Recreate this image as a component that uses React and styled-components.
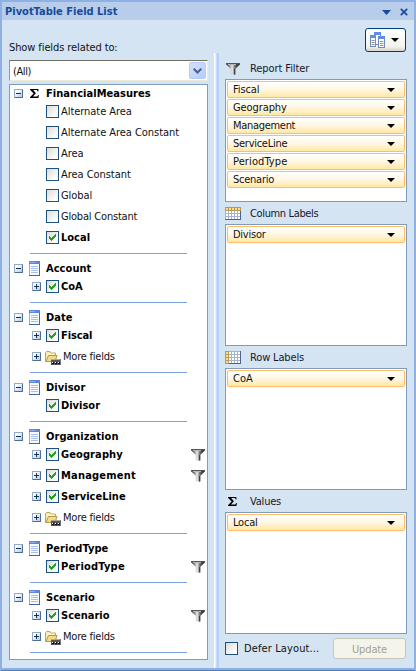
import React from "react";
import styled, { createGlobalStyle, css } from "styled-components";

const GlobalStyle = createGlobalStyle`
  *, *::before, *::after { box-sizing: border-box; }
  body { margin: 0; background: #d5e4f2; }
  svg { display: block; flex: none; }
`;

const Pane = styled.div`
  width: 416px;
  height: 671px;
  display: flex;
  flex-direction: column;
  background: #d5e4f2;
  border: 2px solid #8fb0e5;
  border-bottom: 1px solid #4f7fb9;
  box-shadow: inset 0 -2px 0 #8fb0e5;
  font-family: "DejaVu Sans Condensed", "DejaVu Sans", sans-serif;
  font-stretch: condensed;
  font-size: 11px;
  line-height: 14px;
  color: #111;
  white-space: nowrap;
  overflow: hidden;
`;

const TitleBar = styled.header`
  flex: none;
  height: 18px;
  display: flex;
  align-items: center;
  padding: 2px 6px 0 3px;
  background: #b8cde9;
  color: #174a9b;
`;

const Title = styled.h1`
  flex: 1;
  margin: 0;
  font-size: 11px;
  line-height: 14px;
  font-weight: bold;
  letter-spacing: 0;
`;

const TitleActions = styled.div`
  display: flex;
  align-items: center;
  gap: 9px;
`;

const Body = styled.main`
  flex: 1;
  min-height: 0;
  display: flex;
  padding: 0 0 2px 7px;
`;

const FieldsColumn = styled.section`
  width: 199px;
  padding-top: 20px;
`;

const FieldsLabel = styled.div`
  height: 20px;
  line-height: 15px;
`;

const Combo = styled.div`
  display: flex;
  align-items: center;
  justify-content: space-between;
  height: 21px;
  margin-bottom: 3px;
  padding: 0 1px 0 3px;
  background: #fff;
  border: 1px solid #ece9d8;
  border-top-color: #716f64;
  border-left-color: #9d9a8b;
`;

const ComboText = styled.span`
  padding-top: 2px;
`;

const ComboButton = styled.span`
  display: flex;
  align-items: center;
  justify-content: center;
  width: 17px;
  height: 17px;
  border-radius: 2px;
  border: 1px solid #b5cbf8;
  background: linear-gradient(135deg, #d5e2ff, #b5cbf9);
`;

const FieldList = styled.div`
  height: 576px;
  padding: 1px 0 0 4px;
  background: #fff;
  border: 1px solid #7f9db9;
`;

const Group = styled.div``;

const GroupHeader = styled.div`
  display: flex;
  align-items: center;
  height: 15px;
`;

const GroupIcon = styled.span`
  display: flex;
  justify-content: center;
  width: 23px;
  padding-right: 1px;
`;

const BoldText = styled.span`
  font-weight: bold;
  letter-spacing: ${(p) => p.$spacing ?? 0}px;
  color: #000;
`;

const PlainText = styled.span`
  letter-spacing: ${(p) => p.$spacing ?? 0}px;
`;

const FieldRow = styled.div`
  display: flex;
  align-items: center;
  height: 21px;
  padding: 0 2px 0 18px;
`;

const ExpandSlot = styled.span`
  display: flex;
  width: 14px;
`;

const FolderSlot = styled.span`
  margin: 2px 0 0 -1px;
`;

const FieldName = styled.span`
  flex: 1;
  display: flex;
  padding-left: 2px;
`;

const Divider = styled.hr`
  width: 157px;
  height: 1px;
  margin: 5px 0 7px 16px;
  border: 0;
  background: #7da2e0;
`;

const Toggle = styled.span`
  flex: none;
  position: relative;
  width: 9px;
  height: 9px;
  border: 1px solid #8fa9c6;
  border-right-color: #4b6c94;
  border-bottom-color: #4b6c94;
  border-radius: 1px;
  background: linear-gradient(135deg, #fff 20%, #b3c8e6);
  &::before,
  &::after {
    content: "";
    position: absolute;
    background: #17324f;
  }
  &::before {
    left: 1px;
    top: 3px;
    width: 5px;
    height: 1px;
  }
  ${(p) =>
    p.$plus &&
    css`
      &::after {
        left: 3px;
        top: 1px;
        width: 1px;
        height: 5px;
      }
    `}
`;

const CheckSquare = styled.span`
  flex: none;
  display: block;
  width: 13px;
  height: 13px;
  border: 1px solid #1c5180;
  background: linear-gradient(135deg, #dcdcd7, #fff 85%);
`;

const Splitter = styled.div`
  width: 5px;
  margin: 33px 6px 0 6px;
  background: linear-gradient(90deg, #fff 0 1px, #e4f0ff 1px 2px, #c3dcff 2px 3px, #b2d1ff 3px 5px);
`;

const AreasColumn = styled.section`
  width: 182px;
  display: flex;
  flex-direction: column;
`;

const ToolbarRow = styled.div`
  display: flex;
  justify-content: flex-end;
  height: 37px;
  padding: 8px 1px 0 0;
`;

const LayoutButton = styled.span`
  display: flex;
  align-items: center;
  justify-content: space-between;
  width: 41px;
  height: 24px;
  padding: 0 6px 0 3px;
  border: 1px solid #003c74;
  border-radius: 3px;
  background: linear-gradient(#fff, #f3f3ee 80%, #d9d5cb);
`;

const AreaHeader = styled.div`
  display: flex;
  align-items: center;
  height: 22px;
  padding-top: 1px;
  color: #17172c;
`;

const AreaIcon = styled.span`
  width: 25px;
  padding-left: ${(p) => p.$inset}px;
`;

const DropArea = styled.div`
  display: flex;
  flex-direction: column;
  gap: 1px;
  height: ${(p) => p.$height}px;
  padding: 1px;
  background: #fff;
  border: 1px solid #7f9db9;
`;

const Chip = styled.div`
  flex: none;
  display: flex;
  align-items: center;
  justify-content: space-between;
  height: 17px;
  padding: 0 9px 0 5px;
  border: 1px solid #ffbd69;
  border-radius: 2px;
  background: linear-gradient(#fff, #fff8e6 45%, #ffe8a6);
`;

const ChipText = styled(PlainText)`
  padding-top: 1px;
  line-height: 14px;
`;

const Footer = styled.footer`
  display: flex;
  align-items: center;
  height: 21px;
  margin-top: 4px;
`;

const DeferText = styled.span`
  flex: 1;
  padding: 1px 0 0 6px;
`;

const UpdateButton = styled.span`
  width: 73px;
  height: 21px;
  margin-right: 1px;
  padding-top: 1px;
  border: 1px solid #c9c7ba;
  border-radius: 3px;
  background: #f5f4ea;
  color: #a1a192;
  line-height: 19px;
  text-align: center;
`;

const Arrow = ({ color = "#000", width = 8, height = 4 }) => (
  <svg width={width} height={height} viewBox="0 0 8 4" preserveAspectRatio="none">
    <path d="M0 0h8L4 4z" fill={color} />
  </svg>
);

const CloseIcon = () => (
  <svg width="8" height="8" viewBox="0 0 8 8">
    <path d="M.8.8l6.4 6.4M7.2.8L.8 7.2" stroke="#174a9b" strokeWidth="1.7" />
  </svg>
);

const ChevronIcon = () => (
  <svg width="9" height="6" viewBox="0 0 9 6">
    <path d="M.7.8l3.8 3.7L8.3.8" fill="none" stroke="#4d6185" strokeWidth="2" />
  </svg>
);

const SigmaIcon = () => (
  <svg width="9" height="9" viewBox="0 0 9 9">
    <path d="M0 0h8.4v2.4h-.7L7 1.1H3.2L5.9 4.2 3 7.6h4.2l1-1.5h.7L8.4 9H0v-.7L3.6 4.6 0 .7z" fill="#000" />
  </svg>
);

const SheetIcon = () => (
  <svg width="11" height="15" viewBox="0 0 11 15">
    <rect width="11" height="15" fill="#8fa9dc" />
    <rect x="1" y="3" width="9" height="11" fill="#f7faff" />
    <rect width="11" height="3" fill="#5b86dd" />
    <rect x="1" y="1" width="5" height="1" fill="#8fb1f1" />
    <path d="M2 5.5h7M2 7.5h7M2 9.5h7M2 11.5h7" stroke="#a9c0ea" />
    <path d="M10.5 3v12M0 14.5h11" stroke="#4566a2" />
  </svg>
);

const CheckIcon = () => (
  <svg width="11" height="11" viewBox="0 0 11 11" shapeRendering="crispEdges">
    <path d="M2 4h1v1h1v1h1V5h1V4h1V3h1V2h1v3H8v1H7v1H6v1H5v1H4V8H3V7H2z" fill="#21a121" />
  </svg>
);

const FunnelIcon = () => (
  <svg width="14" height="12" viewBox="0 0 14 12">
    <defs>
      <linearGradient id="funnel">
        <stop offset="0" stopColor="#2a2a2a" />
        <stop offset=".25" stopColor="#8a8a8a" />
        <stop offset=".44" stopColor="#f0f0f0" />
        <stop offset=".58" stopColor="#8b8b8b" />
        <stop offset=".75" stopColor="#4a4a4a" />
        <stop offset="1" stopColor="#222" />
      </linearGradient>
    </defs>
    <path d="M0 0h14v1.2L9.3 6v5.5H4.9V6L0 1.2z" fill="url(#funnel)" />
    <path d="M0 .5h14" stroke="#555" />
    <path d="M2 1.5h8" stroke="#b9b9b9" />
    <path d="M8.7 6v5.5" stroke="#333" />
  </svg>
);

const FolderIcon = () => (
  <svg width="16" height="14" viewBox="0 0 16 14">
    <path d="M.5 10.5v-9l1-1h3.5l1 1.5h4.5v8.5z" fill="#f8eaae" stroke="#c3a654" />
    <path d="M1 10.5L3.5 4.5H12L10 10.5z" fill="#f3dc88" stroke="#b79743" />
    <path d="M2 3.2h7.5" stroke="#fffbe0" />
    <rect x="6" y="8" width="10" height="6" fill="#555" />
    <path d="M6 8.5h10" stroke="#a8a8a8" />
    <path d="M15.5 8v6" stroke="#777" />
    <path d="M7 11h2v2H7zM10 11h2v2h-2zM13 11h2v2h-2z" fill="#111" />
    <path d="M7 11h1v1H7zM10 11h1v1h-1zM13 11h1v1h-1z" fill="#fff" />
  </svg>
);

const GridIcon = ({ rows }) => (
  <svg width="16" height="13" viewBox="0 0 16 13">
    <rect width="16" height="13" fill="#a5b2d0" />
    {rows ? (
      <rect width="4" height="13" fill="#b9994f" />
    ) : (
      <rect width="16" height="4" fill="#b9994f" />
    )}
    {[0, 1, 2, 3].map((r) =>
      [0, 1, 2, 3, 4].map((c) => (
        <rect
          key={`${r}-${c}`}
          x={1 + c * 3}
          y={1 + r * 3}
          width="2"
          height="2"
          fill={(rows ? c === 0 : r === 0) ? "#f8dc92" : "#fff"}
        />
      ))
    )}
    <path d={rows ? "M15.5 0v13M4 12.5h12" : "M15.5 4v9M0 12.5h16"} stroke="#4c6590" />
  </svg>
);

const LayoutIcon = () => (
  <svg width="17" height="16" viewBox="0 0 17 16">
    <g stroke="#7389ae">
      <rect x="5.5" y=".5" width="6" height="12" fill="#fff" />
      <rect x="1.5" y="3.5" width="5" height="11" fill="#fff" />
      <rect x="9.5" y="4.5" width="6" height="11" fill="#fff" />
    </g>
    <path d="M5 0h7v3H5zM1 3h6v3H1zM9 4h7v3H9z" fill="#5f8ee8" />
    <path d="M2.5 8.5h3M2.5 10.5h3M2.5 12.5h3M11 9.5h3.5M11 11.5h3.5M11 13.5h3.5" stroke="#7c91b5" />
  </svg>
);

const Checkbox = ({ checked }) => <CheckSquare>{checked && <CheckIcon />}</CheckSquare>;

const plain = (name) => ({ name, spacing: -0.05 });
const picked = (name, opts = {}) => ({ name, checked: true, ...opts });
const more = { name: "More fields", folder: true, expandable: true, spacing: -0.22 };

const groups = [
  {
    name: "FinancialMeasures",
    measure: true,
    fields: [
      plain("Alternate Area"),
      plain("Alternate Area Constant"),
      plain("Area"),
      plain("Area Constant"),
      plain("Global"),
      { name: "Global Constant", spacing: -0.2 },
      picked("Local"),
    ],
  },
  { name: "Account", fields: [picked("CoA", { expandable: true })] },
  { name: "Date", fields: [picked("Fiscal", { expandable: true, spacing: -0.1 }), more] },
  { name: "Divisor", fields: [picked("Divisor")] },
  {
    name: "Organization",
    fields: [
      picked("Geography", { expandable: true, filtered: true, spacing: 0.1 }),
      picked("Management", { expandable: true, filtered: true, spacing: 0.2 }),
      picked("ServiceLine", { expandable: true }),
      more,
    ],
  },
  { name: "PeriodType", fields: [picked("PeriodType", { filtered: true, spacing: 0.2 })] },
  { name: "Scenario", fields: [picked("Scenario", { expandable: true, filtered: true }), more] },
];

const areas = [
  {
    title: "Report Filter",
    spacing: -0.08,
    icon: <FunnelIcon />,
    inset: 1,
    height: 123,
    items: [
      { name: "Fiscal", spacing: -0.1 },
      { name: "Geography", spacing: -0.1 },
      { name: "Management", spacing: -0.3 },
      { name: "ServiceLine", spacing: -0.27 },
      { name: "PeriodType", spacing: 0.1 },
      { name: "Scenario", spacing: -0.25 },
    ],
  },
  {
    title: "Column Labels",
    spacing: -0.36,
    icon: <GridIcon />,
    inset: 0,
    height: 122,
    items: [{ name: "Divisor", spacing: -0.25 }],
  },
  {
    title: "Row Labels",
    spacing: -0.15,
    icon: <GridIcon rows />,
    inset: 0,
    height: 122,
    items: [{ name: "CoA", spacing: 0 }],
  },
  {
    title: "Values",
    spacing: -0.2,
    icon: <SigmaIcon />,
    inset: 3,
    height: 122,
    items: [{ name: "Local", spacing: -0.2 }],
  },
];

const Field = ({ field }) => (
  <FieldRow>
    <ExpandSlot>{field.expandable && <Toggle $plus />}</ExpandSlot>
    {field.folder ? (
      <FolderSlot>
        <FolderIcon />
      </FolderSlot>
    ) : (
      <Checkbox checked={field.checked} />
    )}
    <FieldName>
      {field.checked ? (
        <BoldText $spacing={field.spacing}>{field.name}</BoldText>
      ) : (
        <PlainText $spacing={field.spacing}>{field.name}</PlainText>
      )}
    </FieldName>
    {field.filtered && <FunnelIcon />}
  </FieldRow>
);

export default function App() {
  return (
    <>
      <GlobalStyle />
      <Pane>
        <TitleBar>
          <Title>PivotTable Field List</Title>
          <TitleActions>
            <Arrow color="#174a9b" width={9} height={5} />
            <CloseIcon />
          </TitleActions>
        </TitleBar>
        <Body>
          <FieldsColumn>
            <FieldsLabel>
              <PlainText $spacing={-0.1}>Show fields related to:</PlainText>
            </FieldsLabel>
            <Combo>
              <ComboText>
                <PlainText $spacing={-0.4}>(All)</PlainText>
              </ComboText>
              <ComboButton>
                <ChevronIcon />
              </ComboButton>
            </Combo>
            <FieldList>
              {groups.map((group) => (
                <Group key={group.name}>
                  <GroupHeader>
                    <Toggle />
                    <GroupIcon>{group.measure ? <SigmaIcon /> : <SheetIcon />}</GroupIcon>
                    <BoldText $spacing={0.05}>{group.name}</BoldText>
                  </GroupHeader>
                  {group.fields.map((field) => (
                    <Field key={field.name} field={field} />
                  ))}
                  <Divider />
                </Group>
              ))}
            </FieldList>
          </FieldsColumn>
          <Splitter />
          <AreasColumn>
            <ToolbarRow>
              <LayoutButton>
                <LayoutIcon />
                <Arrow />
              </LayoutButton>
            </ToolbarRow>
            {areas.map((area) => (
              <React.Fragment key={area.title}>
                <AreaHeader>
                  <AreaIcon $inset={area.inset}>{area.icon}</AreaIcon>
                  <PlainText $spacing={area.spacing}>{area.title}</PlainText>
                </AreaHeader>
                <DropArea $height={area.height}>
                  {area.items.map((item) => (
                    <Chip key={item.name}>
                      <ChipText $spacing={item.spacing}>{item.name}</ChipText>
                      <Arrow />
                    </Chip>
                  ))}
                </DropArea>
              </React.Fragment>
            ))}
            <Footer>
              <Checkbox />
              <DeferText>
                <PlainText $spacing={0.12}>Defer Layout...</PlainText>
              </DeferText>
              <UpdateButton>
                <PlainText $spacing={-0.15}>Update</PlainText>
              </UpdateButton>
            </Footer>
          </AreasColumn>
        </Body>
      </Pane>
    </>
  );
}
